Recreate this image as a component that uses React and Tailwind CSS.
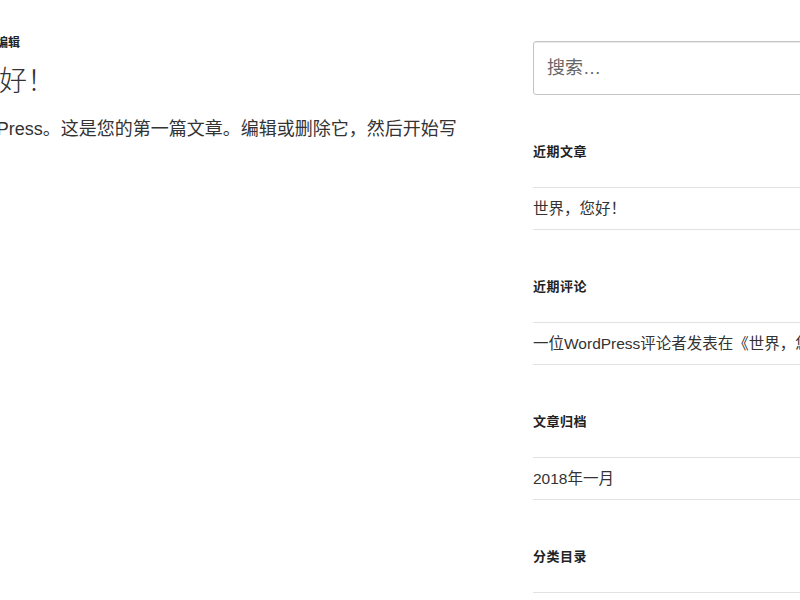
import React from 'react';

const widgets = [
  { title: '近期文章', items: ['世界，您好！'] },
  { title: '近期评论', items: ['一位WordPress评论者发表在《世界，您好！》上'] },
  { title: '文章归档', items: ['2018年一月'] },
  { title: '分类目录', items: ['未分类'] },
];

const Widget = ({ title, items }) => (
  <section className="mb-[47px]">
    <h2 className="text-[13px] leading-[20px] font-bold tracking-[0.5px] text-[#222] mb-[25px]">
      {title}
    </h2>
    <ul className="border-t border-[#e2e2e2]">
      {items.map((item) => (
        <li
          key={item}
          className="border-b border-[#e2e2e2] pt-[11px] pb-[10px] text-[15.5px] leading-[20px] text-[#333] whitespace-nowrap"
        >
          {item}
        </li>
      ))}
    </ul>
  </section>
);

export default function App() {
  return (
    <div className="w-[800px] h-[600px] overflow-hidden bg-white font-['Liberation_Sans','Noto_Sans_CJK_SC',sans-serif]">
      <div className="flex items-start">
        {/* main post column, cut off on the left */}
        <main className="-ml-[113px] w-[580px] shrink-0 pt-[35px]">
          <div className="flex text-[12px] leading-[16px] font-bold text-[#222]">
            <span className="w-[109px] shrink-0 overflow-hidden whitespace-nowrap text-[#767676]">
              发布于 2018年1月
            </span>
            <span>编辑</span>
          </div>
          <h1 className="mt-[13px] text-[28px] leading-[36px] font-light text-[#333]">
            世界，您好！
          </h1>
          <p className="mt-[15px] -ml-[5px] text-[18px] leading-[28px] text-[#333]">
            欢迎使用WordPress。这是您的第一篇文章。编辑或删除它，然后开始写作吧！
          </p>
        </main>

        {/* sidebar */}
        <aside className="ml-[66px] w-[360px] shrink-0 pt-[41px]">
          <div className="mb-[47px] h-[54px] rounded-[3px] border border-[#c4c4c4] shadow-[inset_0_1px_1px_rgba(0,0,0,0.08)] flex items-center px-[13px]">
            <input
              type="search"
              placeholder="搜索…"
              className="w-full bg-transparent outline-none text-[18px] text-[#333] placeholder:text-[#666]"
            />
          </div>
          {widgets.map((w) => (
            <Widget key={w.title} title={w.title} items={w.items} />
          ))}
        </aside>
      </div>
    </div>
  );
}
